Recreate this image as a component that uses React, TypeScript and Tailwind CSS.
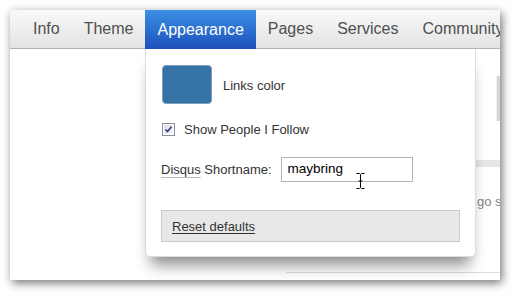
import { Pencil } from "lucide-react";

const tabs = ["Info", "Theme", "Appearance", "Pages", "Services", "Community"];

function CheckBox() {
  return (
    <svg width="13" height="13" viewBox="0 0 13 13" className="shrink-0">
      <defs>
        <linearGradient id="cb" x1="0" y1="0" x2="1" y2="1">
          <stop offset="0" stopColor="#dcdce4" />
          <stop offset="1" stopColor="#f6f6f8" />
        </linearGradient>
      </defs>
      <rect x="0.5" y="0.5" width="12" height="12" fill="#fff" stroke="#8b8e9c" />
      <rect x="2" y="2" width="9" height="9" fill="url(#cb)" />
      <path d="M3.5 6.5 L5.5 8.5 L9.5 3.8" fill="none" stroke="#2a3a8c" strokeWidth="1.6" />
    </svg>
  );
}

function IBeam() {
  return (
    <svg width="9" height="16" viewBox="0 0 9 16" className="absolute left-[210px] top-[124px]">
      <path d="M0.5 0.5 H3.5 L4.5 1.5 L5.5 0.5 H8.5 M4.5 1.5 V14.5 M0.5 15.5 H3.5 L4.5 14.5 L5.5 15.5 H8.5 M2.5 8 H6.5" fill="none" stroke="#000" strokeWidth="1" />
    </svg>
  );
}

function App() {
  return (
    <div className="w-[519px] h-[299px] bg-white overflow-hidden font-['Liberation_Sans',Arial,sans-serif] pt-[10px] pl-[10px]">
      <div className="w-[490px] h-[270px] bg-white flex flex-col overflow-hidden shadow-[2px_3px_9px_rgba(0,0,0,0.55)]">
        <nav className="h-[39px] shrink-0 flex pl-[11px] bg-gradient-to-b from-[#f9f9f9] to-[#e3e3e3] border-b border-[#b4b4b4] text-[16px] whitespace-nowrap">
          {tabs.map((t) =>
            t === "Appearance" ? (
              <div
                key={t}
                className="h-[39px] px-3 flex items-center text-white bg-gradient-to-b from-[#3c90e4] to-[#204fbc]"
              >
                {t}
              </div>
            ) : (
              <div key={t} className="px-3 flex items-center text-[#4f4f4f]">
                {t}
              </div>
            )
          )}
        </nav>

        <div className="relative flex-1 flex">
          {/* page behind the menu */}
          <div className="w-[230px] shrink-0 pt-[139px] pl-[231px]">
            <Pencil size={20} className="text-[#cfcfcf]" />
          </div>
          <div className="flex-1 flex flex-col pt-[24px] pl-[45px] whitespace-nowrap">
            <div className="text-[64px] leading-[52px] h-[52px] font-bold text-[#d6d6d6] origin-left scale-x-[0.47] ml-[4px]">
              WHAT A DAY<span className="ml-[42px]">IT HAS BEEN</span>
            </div>
            <div className="mt-[35px] h-[7px] bg-[#e6e6e6]" />
            <div className="mt-[26px] text-[13px] text-[#858585] leading-[18px]">
              "It does not matter how slow you go so long as you do not stop."
            </div>
            <div className="mt-[23px] text-[13px] text-[#858585] leading-[18px]">
              Wisdom of <span className="font-bold">Confucius</span>
            </div>
            <div className="mt-[20px] border-t border-[#dedede]" />
          </div>

          {/* dropdown panel */}
          <div className="absolute z-10 left-[135px] top-0 w-[331px] bg-white border border-t-0 border-[#dcdcdc] rounded-b-[5px] pl-[16px] pr-[15px] pt-[16px] pb-[14px] text-[13px] text-[#333] shadow-[0_14px_14px_-6px_rgba(0,0,0,0.45)]">
            <div className="flex items-center h-[39px]">
              <div className="w-[50px] h-[39px] rounded-[4px] bg-[#3572a5] border border-[#7f9cba]" />
              <span className="ml-[11px] mt-[3px]">Links color</span>
            </div>
            <div className="flex items-center h-[14px] mt-[18px]">
              <CheckBox />
              <span className="ml-[9px] mt-[2px]">Show People I Follow</span>
            </div>
            <div className="flex items-center h-[25px] mt-[21px] -ml-px">
              <span>
                <span className="underline decoration-[#bbb] underline-offset-[3px]">Disqus</span> Shortname:
              </span>
              <div className="ml-[9px] w-[132px] h-[25px] border border-[#b5b5b5] bg-white flex items-center pl-[6px] text-[13.5px] text-black">
                maybring
              </div>
            </div>
            <div className="mt-[28px] -ml-px h-[32px] bg-[#e8e8e8] border border-[#c9c9c9] flex items-center pl-[10px]">
              <span className="underline underline-offset-[2px] mt-px">Reset defaults</span>
            </div>
            <IBeam />
          </div>
        </div>
      </div>
    </div>
  );
}

export default App;
